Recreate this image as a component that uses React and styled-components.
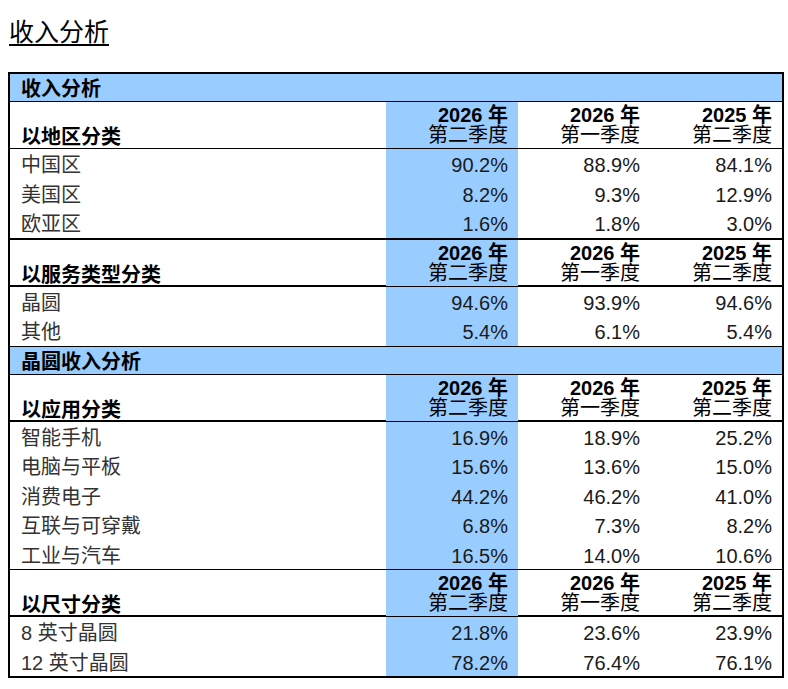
import React from "react";
import styled, { createGlobalStyle } from "styled-components";

const Global = createGlobalStyle`
  html, body { margin: 0; padding: 0; background: #fff; }
  body {
    font-family: "Liberation Sans", "Noto Sans CJK SC", sans-serif;
    color: #111;
  }
`;

const BLUE = "#99ccff";

const Page = styled.div`
  display: flex;
  flex-direction: column;
  align-items: flex-start;
  padding: 21px 0 0 8px;
`;

const Title = styled.h1`
  margin: 0 0 0 1px;
  font-size: 25px;
  font-weight: 400;
  line-height: 23px;
  color: #000;
  border-bottom: 2px solid #000;
`;

const Table = styled.div`
  margin-top: 26px;
  width: 776px;
  box-sizing: border-box;
  border: 2px solid #000;
  font-size: 20px;
`;

const Bar = styled.div`
  height: 28px;
  box-sizing: border-box;
  background: ${BLUE};
  border-bottom: 1px solid #000;
  padding: 4px 0 0 11px;
  line-height: 23px;
  font-weight: 700;
  color: #000;
`;

const Grid = styled.div`
  display: grid;
  grid-template-columns: 376px repeat(3, 132px);
`;

const HeadRow = styled(Grid)`
  height: 47px;
  box-sizing: border-box;
  border-bottom: ${(p) => p.$rule}px solid #000;
`;

const HeadLabel = styled.div`
  display: flex;
  align-items: flex-end;
  padding: 0 0 1px 11px;
  line-height: 19px;
  font-weight: 700;
  color: #000;
`;

const Period = styled.div`
  display: flex;
  flex-direction: column;
  justify-content: flex-end;
  align-items: flex-end;
  padding: 3px 10px 3px 0;
  line-height: 20px;
  color: #000;
  background: ${(p) => (p.$hl ? BLUE : "transparent")};
`;

const Year = styled.span`
  font-weight: 700;
`;

const Quarter = styled.span`
  font-weight: 400;
`;

const Group = styled.div`
  border-bottom: ${(p) => p.$rule}px solid #000;
`;

const DataRow = styled(Grid)`
  height: 29.5px;
`;

const Label = styled.div`
  padding: 4px 0 0 11px;
  line-height: 25.5px;
  color: #333;
`;

const Value = styled.div`
  padding: 4px 10px 0 0;
  line-height: 25.5px;
  text-align: right;
  color: #1a1a1a;
  background: ${(p) => (p.$hl ? BLUE : "transparent")};
`;

const periods = [
  ["2026 年", "第二季度"],
  ["2026 年", "第一季度"],
  ["2025 年", "第二季度"],
];

const sections = [
  { kind: "bar", title: "收入分析" },
  {
    kind: "group",
    label: "以地区分类",
    headRule: 1,
    endRule: 2,
    rows: [
      ["中国区", "90.2%", "88.9%", "84.1%"],
      ["美国区", "8.2%", "9.3%", "12.9%"],
      ["欧亚区", "1.6%", "1.8%", "3.0%"],
    ],
  },
  {
    kind: "group",
    label: "以服务类型分类",
    headRule: 2,
    endRule: 1,
    rows: [
      ["晶圆", "94.6%", "93.9%", "94.6%"],
      ["其他", "5.4%", "6.1%", "5.4%"],
    ],
  },
  { kind: "bar", title: "晶圆收入分析" },
  {
    kind: "group",
    label: "以应用分类",
    headRule: 2,
    endRule: 1,
    rows: [
      ["智能手机", "16.9%", "18.9%", "25.2%"],
      ["电脑与平板", "15.6%", "13.6%", "15.0%"],
      ["消费电子", "44.2%", "46.2%", "41.0%"],
      ["互联与可穿戴", "6.8%", "7.3%", "8.2%"],
      ["工业与汽车", "16.5%", "14.0%", "10.6%"],
    ],
  },
  {
    kind: "group",
    label: "以尺寸分类",
    headRule: 2,
    endRule: 0,
    rows: [
      ["8 英寸晶圆", "21.8%", "23.6%", "23.9%"],
      ["12 英寸晶圆", "78.2%", "76.4%", "76.1%"],
    ],
  },
];

function Section({ s }) {
  if (s.kind === "bar") return <Bar>{s.title}</Bar>;
  return (
    <>
      <HeadRow $rule={s.headRule}>
        <HeadLabel>{s.label}</HeadLabel>
        {periods.map(([y, q], i) => (
          <Period key={i} $hl={i === 0}>
            <Year>{y}</Year>
            <Quarter>{q}</Quarter>
          </Period>
        ))}
      </HeadRow>
      <Group $rule={s.endRule}>
        {s.rows.map(([label, ...vals]) => (
          <DataRow key={label}>
            <Label>{label}</Label>
            {vals.map((v, i) => (
              <Value key={i} $hl={i === 0}>
                {v}
              </Value>
            ))}
          </DataRow>
        ))}
      </Group>
    </>
  );
}

export default function App() {
  return (
    <>
      <Global />
      <Page>
        <Title>收入分析</Title>
        <Table>
          {sections.map((s, i) => (
            <Section key={i} s={s} />
          ))}
        </Table>
      </Page>
    </>
  );
}
